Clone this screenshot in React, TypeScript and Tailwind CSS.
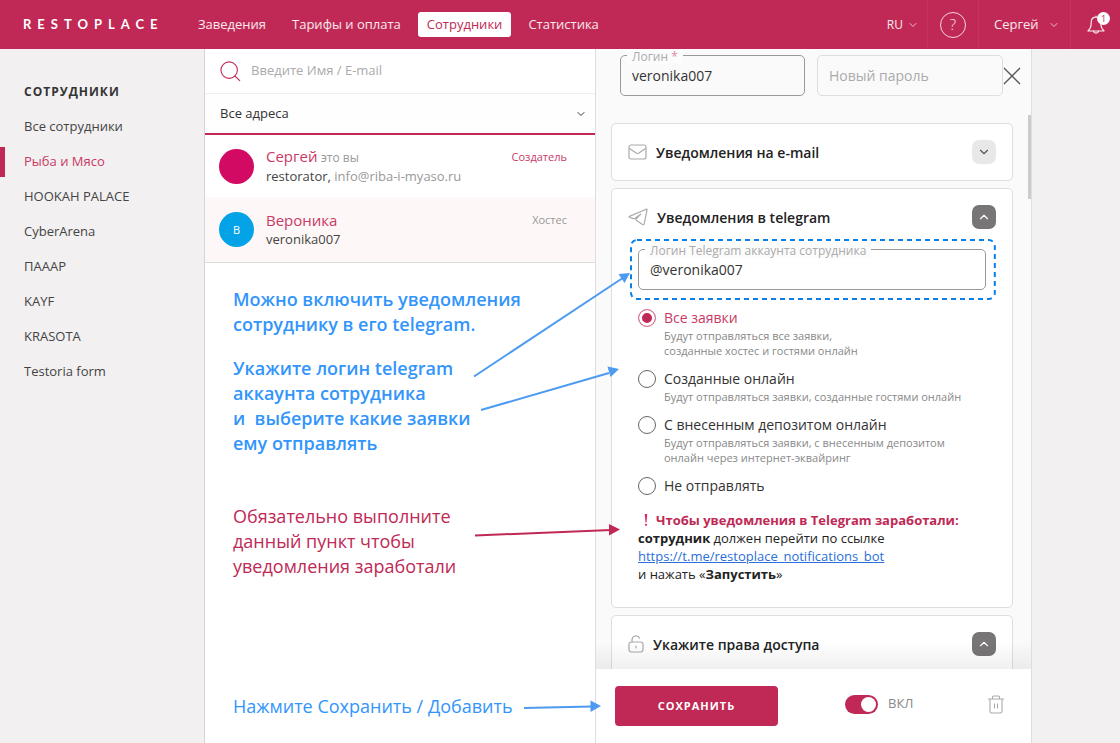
import { ReactNode, useState } from "react";
import { ChevronDown, ChevronUp } from "lucide-react";

const navItems = ["Заведения", "Тарифы и оплата", "Сотрудники", "Статистика"];

const places = [
  "Все сотрудники",
  "Рыба и Мясо",
  "HOOKAH PALACE",
  "CyberArena",
  "ПАААР",
  "KAYF",
  "KRASOTA",
  "Testoria form",
];

const options = [
  {
    id: "all",
    title: "Все заявки",
    text: ["Будут отправляться все заявки,", "созданные хостес и гостями онлайн"],
  },
  {
    id: "online",
    title: "Созданные онлайн",
    text: ["Будут отправляться заявки, созданные гостями онлайн"],
  },
  {
    id: "deposit",
    title: "С внесенным депозитом онлайн",
    text: [
      "Будут отправляться заявки, с внесенным депозитом",
      "онлайн через интернет-эквайринг",
    ],
  },
  { id: "none", title: "Не отправлять", text: [] },
];

function Header() {
  return (
    <header className="flex h-[49px] shrink-0 items-center bg-[#c02955] text-[13px] text-white/90">
      <a
        href="#"
        className="w-[189px] shrink-0 pl-[23px] font-[Lato] text-[13px] font-bold tracking-[6px] text-white"
      >
        RESTOPLACE
      </a>
      <nav className="flex flex-1 items-center gap-2">
        {navItems.map((item) => (
          <a
            key={item}
            href="#"
            className={
              item === "Сотрудники"
                ? "rounded-[3px] bg-white px-[9px] py-[3px] text-[#c02955]"
                : "px-[9px] py-[3px]"
            }
          >
            {item}
          </a>
        ))}
      </nav>
      <button type="button" className="flex h-full items-center gap-1 pr-2 text-[12px]">
        RU
        <ChevronDown size={12} strokeWidth={1.5} />
      </button>
      <div className="flex h-full w-[52px] items-center justify-center border-x border-white/5">
        <button
          type="button"
          aria-label="Помощь"
          className="flex size-[26px] items-center justify-center rounded-full border border-white/80 text-[15px] font-light"
        >
          ?
        </button>
      </div>
      <button
        type="button"
        className="flex h-full w-[92px] items-center justify-between border-r border-white/5 pr-[10px] pl-[15px]"
      >
        Сергей
        <ChevronDown size={12} strokeWidth={1.5} />
      </button>
      <button
        type="button"
        aria-label="Уведомления"
        className="relative flex h-full w-[49px] items-center justify-center"
      >
        <svg
          className="h-5 w-[18px]"
          viewBox="0 0 18 20"
          fill="none"
          stroke="currentColor"
          strokeWidth="1.2"
          strokeLinecap="round"
          strokeLinejoin="round"
        >
          <path d="M9 1.2v1M9 2.2c-3.4 0-4.8 2.6-4.8 5.2 0 4.8-1 6-3.2 8.6h16c-2.2-2.6-3.2-3.8-3.2-8.6 0-2.6-1.4-5.2-4.8-5.2z" />
          <path d="M6.4 16.2a2.7 2.7 0 0 0 5.2 0" />
        </svg>
        <span className="absolute top-3 right-[10px] flex size-[13px] items-center justify-center rounded-full bg-white text-[9px] text-[#c02955]">
          1
        </span>
      </button>
    </header>
  );
}

function Sidebar() {
  return (
    <aside className="w-[205px] shrink-0 border-r border-[#d6d4d5] pt-[34px]">
      <h2 className="pl-6 text-[12px] leading-[18px] font-bold tracking-[1px] text-[#333]">
        СОТРУДНИКИ
      </h2>
      <ul className="pt-2 text-[13px] text-[#444]">
        {places.map((place) => (
          <li key={place} className="flex h-[35px] items-center">
            {place === "Рыба и Мясо" ? (
              <>
                <span className="h-[30px] w-[5px] bg-[#c02955]" />
                <a href="#" className="pl-[19px] text-[#c83a64]">
                  {place}
                </a>
              </>
            ) : (
              <a href="#" className="pl-6">
                {place}
              </a>
            )}
          </li>
        ))}
      </ul>
    </aside>
  );
}

function StaffList() {
  return (
    <main className="flex min-w-0 flex-1 flex-col bg-white">
      <label className="flex h-[45px] shrink-0 items-center border-b border-[#eee] pl-[15px]">
        <svg
          className="size-[23px]"
          viewBox="0 0 23 23"
          fill="none"
          stroke="#c02955"
          strokeWidth="1.2"
          strokeLinecap="round"
        >
          <circle cx="10" cy="10" r="9" />
          <path d="M16.2 16.4l5.3 5" />
        </svg>
        <input
          type="text"
          aria-label="Поиск сотрудника"
          placeholder="Введите Имя / E-mail"
          className="ml-[10px] w-full text-[13px] outline-none placeholder:text-[#aaa]"
        />
      </label>
      <div className="relative h-[41px] shrink-0 border-b-2 border-[#c02955] bg-[#fefefe]">
        <select
          aria-label="Адрес"
          className="h-full w-full appearance-none pl-[15px] text-[13px] text-[#333] outline-none"
        >
          <option>Все адреса</option>
        </select>
        <ChevronDown
          size={12}
          className="pointer-events-none absolute top-[14px] right-2 text-[#334]"
        />
      </div>
      <ul className="text-[13px] leading-[18px] text-[#444]">
        <li className="flex h-[62px] items-center pr-7 pl-[14px]">
          <span className="size-[35px] shrink-0 rounded-full bg-[#d30a63]" />
          <div className="ml-3 flex-1">
            <p>
              <a href="#" className="text-[15px] text-[#c83a64]">
                Сергей
              </a>{" "}
              <span className="text-[12px] text-[#999]">это вы</span>
            </p>
            <p>
              restorator, <span className="text-[#999]">info@riba-i-myaso.ru</span>
            </p>
          </div>
          <span className="self-start pt-[13px] text-[11px] text-[#c83a64]">Создатель</span>
        </li>
        <li className="flex h-[66px] items-center border-b border-[#ddd] bg-[#fdf7f7] pr-7 pl-[14px]">
          <span className="flex size-[35px] shrink-0 items-center justify-center rounded-full bg-[#04a3e8] text-[11px] text-white">
            B
          </span>
          <div className="ml-3 flex-1">
            <p>
              <a href="#" className="text-[15px] text-[#c83a64]">
                Вероника
              </a>
            </p>
            <p>veronika007</p>
          </div>
          <span className="self-start pt-[14px] text-[11px] text-[#999]">Хостес</span>
        </li>
      </ul>
      <div className="pt-6 pl-7 text-[18px] leading-[25px] whitespace-nowrap text-[#3295fb]">
        <p className="font-semibold">
          Можно включить уведомления
          <br />
          сотруднику в его telegram.
        </p>
        <p className="mt-[19px] font-semibold">
          Укажите логин telegram
          <br />
          аккаунта сотрудника
          <br />
          и&nbsp; выберите какие заявки
          <br />
          ему отправлять
        </p>
        <p className="mt-12 text-[#c02955]">
          Обязательно выполните
          <br />
          данный пункт чтобы
          <br />
          уведомления заработали
        </p>
        <p className="mt-[115px]">Нажмите Сохранить / Добавить</p>
      </div>
    </main>
  );
}

function Card({
  icon,
  title,
  open,
  children,
}: {
  icon: ReactNode;
  title: string;
  open?: boolean;
  children?: ReactNode;
}) {
  return (
    <section className="rounded-[5px] border border-[#dedede] bg-white">
      <div className="flex h-14 items-center px-4">
        {icon}
        <h3 className="ml-[9px] flex-1 text-[14px] font-semibold text-[#222]">{title}</h3>
        <button
          type="button"
          aria-label={title}
          className={
            open
              ? "flex size-6 items-center justify-center rounded-[7px] bg-[#777575] text-white"
              : "flex size-6 items-center justify-center rounded-[7px] bg-[#e8e8e8] text-[#555]"
          }
        >
          {open ? <ChevronUp size={14} /> : <ChevronDown size={14} />}
        </button>
      </div>
      {children}
    </section>
  );
}

function Field({ id, label, value }: { id: string; label: ReactNode; value: string }) {
  return (
    <div className="relative h-[41px] flex-1 rounded-[5px] border border-[#999]">
      <label
        htmlFor={id}
        className="absolute -top-[6px] left-[6px] bg-[#fcfcfc] px-[5px] text-[12px] leading-[14px] text-[#aaa]"
      >
        {label}
      </label>
      <input
        id={id}
        type="text"
        defaultValue={value}
        className="h-full w-full px-[11px] text-[14px] text-[#333] outline-none"
      />
    </div>
  );
}

function Panel() {
  const [selected, setSelected] = useState("all");
  const [enabled, setEnabled] = useState(true);

  return (
    <section className="relative flex w-[437px] shrink-0 flex-col border-x border-[#dedede] bg-[#fafafa]">
      <div className="min-h-0 flex-1 overflow-hidden pr-[18px] pl-[15px]">
        <div className="mb-[27px] flex items-center pt-[6px] pl-[9px]">
          <Field
            id="login"
            value="veronika007"
            label={
              <>
                Логин <span className="text-[#e08aa4]">*</span>
              </>
            }
          />
          <input
            type="password"
            aria-label="Новый пароль"
            placeholder="Новый пароль"
            className="ml-3 h-[41px] w-[186px] rounded-[5px] border border-[#dedede] px-[11px] text-[14px] outline-none placeholder:text-[#aaa]"
          />
          <button type="button" aria-label="Закрыть" className="-mr-2 text-[#555]">
            <svg className="size-[18px]" viewBox="0 0 18 18" stroke="currentColor" strokeWidth="1.3">
              <path d="M1 1l16 16M17 1L1 17" />
            </svg>
          </button>
        </div>
        <div className="flex flex-col gap-[7px]">
          <Card
            title="Уведомления на e-mail"
            icon={
              <svg
                className="h-4 w-[19px]"
                viewBox="0 0 19 16"
                fill="none"
                stroke="#aaa"
                strokeWidth="1.2"
              >
                <rect x="1" y="1" width="17" height="14" rx="2" />
                <path d="M1.5 4.5l7 4.7q1 .6 2 0l7-4.7" />
              </svg>
            }
          />
          <Card
            open
            title="Уведомления в telegram"
            icon={
              <svg
                className="h-[18px] w-5"
                viewBox="0 0 20 18"
                fill="none"
                stroke="#aaa"
                strokeWidth="1.2"
                strokeLinejoin="round"
              >
                <path d="M18.8 1L1.4 8.4q-.7.5.1.9l3.6 1.3q.9.3 1.6-.2l6-4.2-4.5 4.6q-.6.7.1 1.4l6.2 4.3q1.2.7 1.7-.6L19 2q.2-.9-.2-1z" />
              </svg>
            }
          >
            <div className="px-[17px] pb-6">
              <div className="relative mt-[-5px] flex p-[9px]">
                <Field
                  id="telegram"
                  label="Логин Telegram аккаунта сотрудника"
                  value="@veronika007"
                />
                <svg className="pointer-events-none absolute inset-0 h-full w-full overflow-visible">
                  <rect
                    x="2"
                    y="0"
                    width="99.4%"
                    height="100%"
                    rx="6"
                    fill="none"
                    stroke="#0b7fe8"
                    strokeWidth="2"
                    strokeDasharray="5 4"
                  />
                </svg>
              </div>
              <div className="flex flex-col gap-[11px] pt-[9px] pl-[9px]">
                {options.map((option) => (
                  <div key={option.id} className="flex">
                    <input
                      id={option.id}
                      type="radio"
                      name="notify"
                      checked={selected === option.id}
                      onChange={() => setSelected(option.id)}
                      className="mt-px size-[18px] shrink-0 appearance-none rounded-full border border-[#666] bg-white checked:border-[#d77c98] checked:bg-[#c02955] checked:shadow-[inset_0_0_0_3px_white]"
                    />
                    <label htmlFor={option.id} className="pl-2 text-[11px] leading-[15px] text-[#888]">
                      <span
                        className={
                          selected === option.id
                            ? "block text-[14px] leading-5 text-[#c83a64]"
                            : "block text-[14px] leading-5 text-[#333]"
                        }
                      >
                        {option.title}
                      </span>
                      {option.text.map((line) => (
                        <span key={line} className="block">
                          {line}
                        </span>
                      ))}
                    </label>
                  </div>
                ))}
              </div>
              <div className="pt-[15px] pl-[9px] text-[13px] leading-[18px] text-[#222]">
                <p className="flex items-center font-bold text-[#c02955]">
                  <svg className="mr-2 ml-[6px] h-3 w-1" viewBox="0 0 4 12" fill="#e0245e">
                    <path d="M.8 0h2.4l-.7 8.4h-1z" />
                    <circle cx="2" cy="10.8" r="1.1" />
                  </svg>
                  Чтобы уведомления в Telegram заработали:
                </p>
                <p>
                  <b>сотрудник</b> должен перейти по ссылке
                </p>
                <p>
                  <a href="https://t.me/restoplace_notifications_bot" className="text-[#2a70d8] underline">
                    https://t.me/restoplace_notifications_bot
                  </a>
                </p>
                <p>
                  и нажать «<b>Запустить</b>»
                </p>
              </div>
            </div>
          </Card>
          <Card
            open
            title="Укажите права доступа"
            icon={
              <svg
                className="h-[18px] w-4"
                viewBox="0 0 16 18"
                fill="none"
                stroke="#aaa"
                strokeWidth="1.2"
                strokeLinecap="round"
              >
                <rect x="1" y="7" width="14" height="10" rx="2.5" />
                <path d="M4 7V4.8a4 4 0 0 1 7.6-1.6M8 11v2" />
              </svg>
            }
          />
        </div>
      </div>
      <div className="absolute top-[66px] right-0 h-[84px] w-[3px] bg-[#ccc]" />
      <div className="pointer-events-none absolute inset-x-0 bottom-[74px] h-7 bg-linear-to-t from-black/6 to-transparent" />
      <footer className="flex h-[74px] shrink-0 items-center bg-white pr-[27px] pb-1 pl-[19px]">
        <button
          type="button"
          className="mt-1 h-10 w-[163px] rounded-[4px] bg-[#c02955] text-[11px] font-bold tracking-[1px] text-white"
        >
          СОХРАНИТЬ
        </button>
        <label className="ml-[67px] flex flex-1 items-center text-[13px] text-[#888]">
          <input
            type="checkbox"
            role="switch"
            checked={enabled}
            onChange={() => setEnabled((prev) => !prev)}
            className="mr-[10px] h-[19px] w-[33px] appearance-none rounded-full bg-[#aaa] p-[2px] before:block before:size-[15px] before:rounded-full before:bg-white checked:bg-[#c02955] checked:before:ml-[14px]"
          />
          ВКЛ
        </label>
        <button type="button" aria-label="Удалить" className="text-[#aaa]">
          <svg
            className="h-[19px] w-4"
            viewBox="0 0 16 19"
            fill="none"
            stroke="currentColor"
            strokeWidth="1.1"
          >
            <path d="M0 4h16M4.5 4V2.2Q4.5 1 5.7 1h4.6q1.2 0 1.2 1.2V4M2 4v12.2Q2 18 3.8 18h8.4q1.8 0 1.8-1.8V4M6.5 8.5v5M9.5 8.5v5" />
          </svg>
        </button>
      </footer>
    </section>
  );
}

// hint arrows lie over the list and the panel
function Arrows() {
  return (
    <svg
      className="pointer-events-none absolute top-0 left-[205px] h-[694px] w-[440px]"
      viewBox="205 49 440 694"
      fill="none"
      strokeWidth="2"
    >
      <g stroke="#4c9bf0">
        <path d="M474 376.500L622 278.500" />
        <path d="M481 410L609 373" />
        <path d="M524 708L592 706.500" />
      </g>
      <g fill="#4c9bf0">
        <path d="M630 273L624.500 283L618.500 274z" />
        <path d="M619 369L610.500 377L607.500 366.500z" />
        <path d="M601 706L590.500 712V700.500z" />
      </g>
      <path d="M475 535.500L611 530" stroke="#c02955" />
      <path d="M620 529.500L609 535.500V524z" fill="#c02955" />
    </svg>
  );
}

export default function App() {
  return (
    <div className="flex h-screen flex-col bg-[#f2f0f1] font-['Open_Sans',sans-serif]">
      <Header />
      <div className="relative flex min-h-0 flex-1">
        <Sidebar />
        <StaffList />
        <Panel />
        <div className="w-[88px] shrink-0" />
        <Arrows />
      </div>
    </div>
  );
}
